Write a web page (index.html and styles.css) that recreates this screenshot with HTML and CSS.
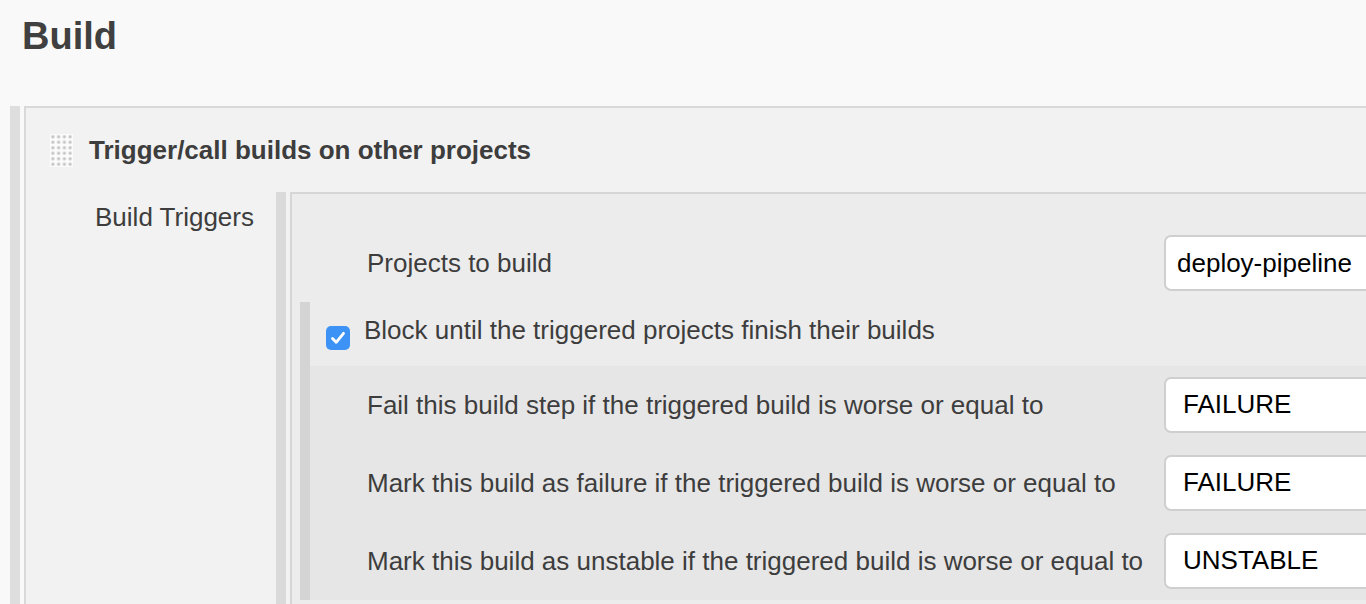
FILE: index.html
```html
<!DOCTYPE html>
<html>
<head>
<meta charset="utf-8">
<link rel="stylesheet" href="styles.css">
</head>
<body>
<h1 class="page-title">Build</h1>
<div class="section">
  <div class="panel">
    <div class="panel-head">
      <span class="handle"></span>
      <span class="panel-title">Trigger/call builds on other projects</span>
    </div>
    <div class="panel-body">
      <div class="side-label">Build Triggers</div>
      <div class="sub">
        <div class="subpanel">
          <div class="field first">
            <label class="field-label">Projects to build</label>
            <input class="text-input" type="text" value="deploy-pipeline">
          </div>
          <div class="nested">
            <div class="check-row">
              <span class="checkbox">
                <svg width="24" height="24" viewBox="0 0 24 24"><path d="M6.5 12.5 L10.2 16.3 L17.5 7.3" fill="none" stroke="#fff" stroke-width="2.8" stroke-linecap="round" stroke-linejoin="round"/></svg>
              </span>
              <span class="check-label">Block until the triggered projects finish their builds</span>
            </div>
            <div class="options">
              <div class="field">
                <label class="field-label">Fail this build step if the triggered build is worse or equal to</label>
                <div class="select-box">FAILURE</div>
              </div>
              <div class="field">
                <label class="field-label">Mark this build as failure if the triggered build is worse or equal to</label>
                <div class="select-box">FAILURE</div>
              </div>
              <div class="field">
                <label class="field-label">Mark this build as unstable if the triggered build is worse or equal to</label>
                <div class="select-box">UNSTABLE</div>
              </div>
            </div>
          </div>
          <div class="subpanel-foot"></div>
        </div>
      </div>
    </div>
  </div>
</div>
</body>
</html>
```

FILE: styles.css
```css
html, body {
  margin: 0;
  padding: 0;
}
body {
  background: #f9f9f9;
  font-family: "Liberation Sans", Arial, sans-serif;
  color: #3d3d3d;
  width: 1366px;
  height: 604px;
  overflow: hidden;
}
.page-title {
  margin: 0;
  padding: 14px 0 0 22px;
  height: 106px;
  box-sizing: border-box;
  font-size: 38px;
  line-height: 44px;
  font-weight: bold;
  color: #404040;
}
.section {
  margin-left: 10px;
  border-left: 10px solid #dedede;
  padding-left: 4px;
  overflow: hidden;
}
.panel {
  border: 2px solid #d9d9d9;
  border-right: none;
  border-bottom: none;
  background: #f2f2f2;
}
.panel-head {
  height: 84px;
  display: flex;
  align-items: center;
  padding-left: 24px;
}
.handle {
  width: 23px;
  height: 33px;
  margin-right: 16px;
  background-color: #fbfbfb;
  background-image: radial-gradient(circle at center, #b9b9b9 0, #c8c8c8 1px, rgba(255,255,255,0) 2.2px);
  background-size: 5.75px 5.5px;
}
.panel-title {
  font-size: 26px;
  font-weight: bold;
  color: #3d3d3d;
}
.panel-body {
  display: flex;
}
.side-label {
  flex: 0 0 250px;
  box-sizing: border-box;
  padding: 10px 22px 0 0;
  text-align: right;
  font-size: 26px;
  line-height: 30px;
  color: #3d3d3d;
}
.sub {
  flex: 1;
  min-width: 0;
  border-left: 10px solid #dadada;
  padding-left: 4px;
}
.subpanel {
  border: 2px solid #d6d6d6;
  border-right: none;
  border-bottom: none;
  background: #ececec;
}
.field {
  display: flex;
  align-items: center;
}
.field.first {
  margin-top: 41px;
  padding-left: 75px;
}
.field-label {
  flex: 0 0 797px;
  font-size: 26px;
  line-height: 30px;
  color: #3d3d3d;
}
.text-input, .select-box {
  flex: 0 0 420px;
  width: 420px;
  height: 56px;
  box-sizing: border-box;
  border: 2px solid #cfcfcf;
  border-radius: 7px;
  background: #fff;
  font-family: "Liberation Sans", Arial, sans-serif;
  font-size: 26px;
  color: #000;
  margin: 0;
  outline: none;
}
.text-input {
  padding: 0 0 0 11px;
}
.select-box {
  padding: 0 0 0 17px;
  line-height: 50px;
}
.nested {
  margin: 11px 0 4px 8px;
  border-left: 10px solid #d4d4d4;
}
.check-row {
  height: 64px;
  display: flex;
  align-items: flex-start;
  padding-left: 16px;
}
.checkbox {
  margin-top: 24px;
  width: 24px;
  height: 24px;
  border-radius: 5px;
  background: #3d93f5;
  display: flex;
}
.check-label {
  margin: 13px 0 0 14px;
  font-size: 26px;
  line-height: 30px;
  color: #3d3d3d;
  white-space: nowrap;
}
.options {
  background: #e6e6e6;
  padding: 11px 0 11px 57px;
  display: flex;
  flex-direction: column;
  gap: 22px;
}
.subpanel-foot {
  height: 20px;
}
```
